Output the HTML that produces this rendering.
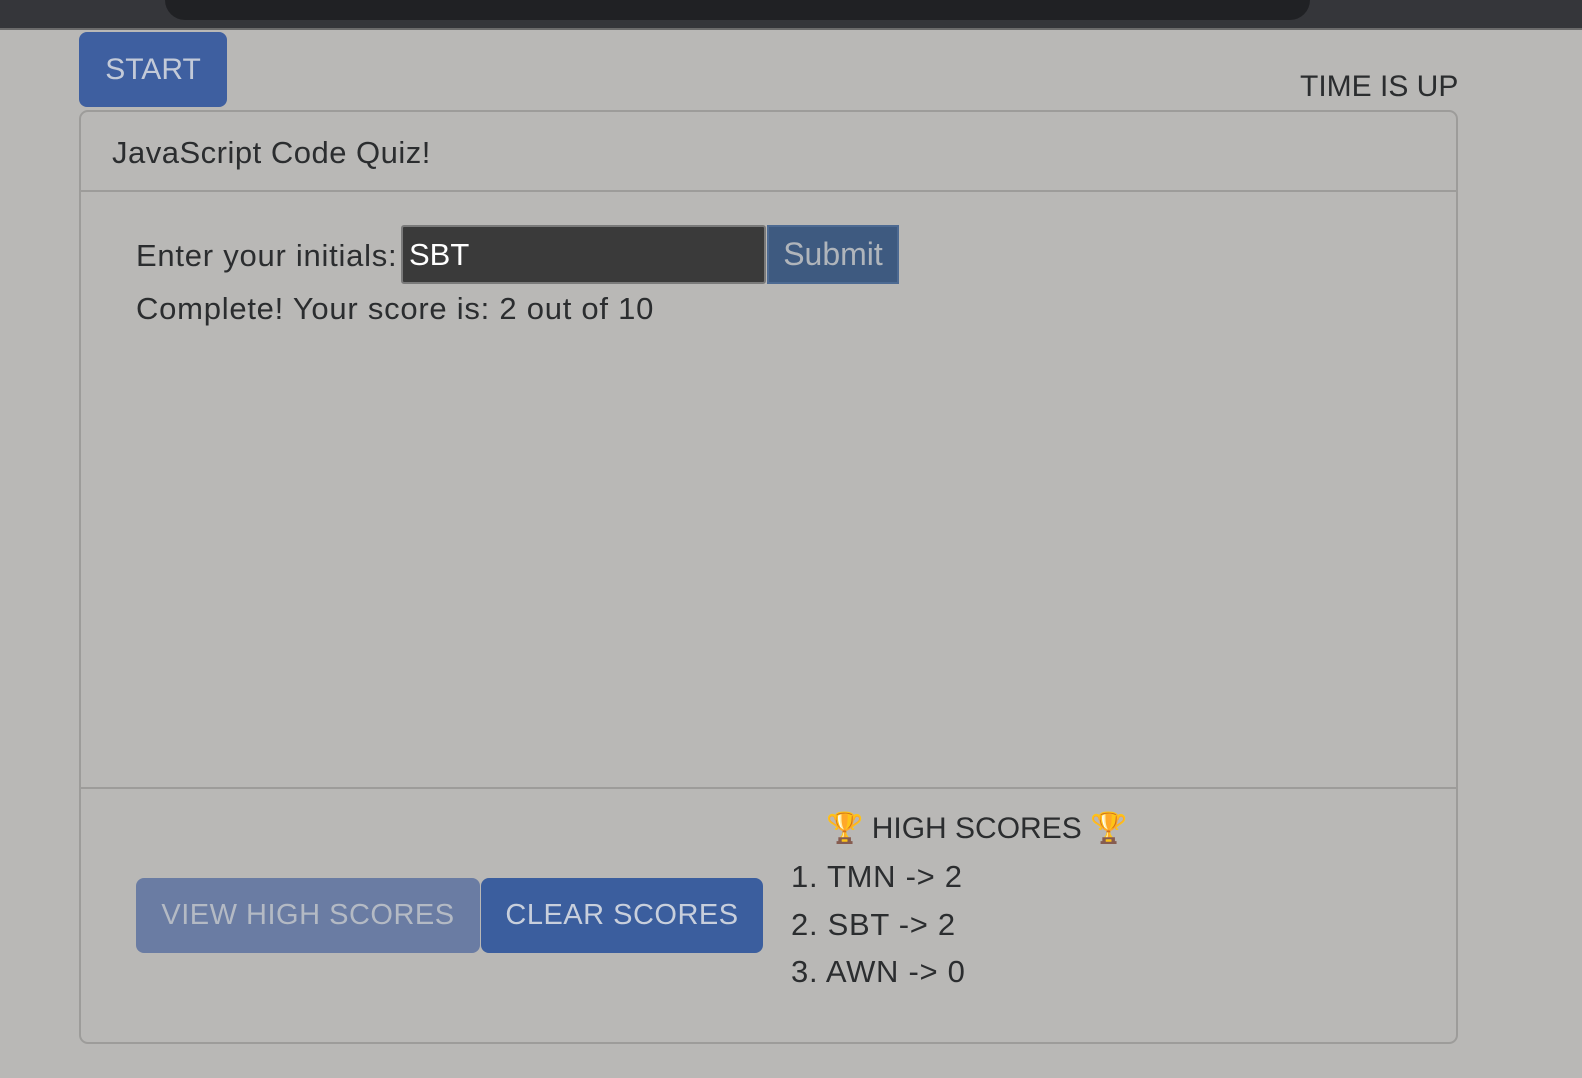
<!DOCTYPE html>
<html><head><meta charset="utf-8"><style>
*{margin:0;padding:0;box-sizing:border-box}
body{width:1582px;height:1078px;background:#b9b8b6;font-family:"Liberation Sans",sans-serif;color:#2b2d2f;position:relative;overflow:hidden}
.a{position:absolute;white-space:nowrap}
</style></head><body>
<div class="a" style="left:0;top:0;width:1582px;height:28px;background:#35363a"></div>
<div class="a" style="left:165px;top:0;width:1145px;height:20px;background:#202124;border-radius:0 0 20px 20px"></div>
<div class="a" style="left:0;top:28px;width:1582px;height:2px;background:#6b6b6b"></div>
<div class="a" style="left:79px;top:32px;width:148px;height:75px;background:#3e5fa0;border-radius:8px;color:#c3cad8;font-size:30px;line-height:75px;text-align:center">START</div>
<div class="a" style="left:1300px;top:69px;font-size:30px;line-height:36px">TIME IS UP</div>
<div class="a" style="left:79px;top:110px;width:1379px;height:934px;border:2px solid #9d9c9a;border-radius:9px"></div>
<div class="a" style="left:80px;top:190px;width:1377px;height:2px;background:#9d9c9a"></div>
<div class="a" style="left:80px;top:787px;width:1377px;height:2px;background:#9d9c9a"></div>
<div class="a" style="left:112px;top:135px;font-size:31px;line-height:36px;letter-spacing:0.5px">JavaScript Code Quiz!</div>
<div class="a" style="left:136px;top:238px;font-size:31px;line-height:36px;letter-spacing:0.75px">Enter your initials:</div>
<div class="a" style="left:401px;top:225px;width:365px;height:59px;background:#3a3a3a;border:2px solid #7a7a7a;border-radius:3px;color:#fff;font-size:31px;line-height:55px;padding-left:6px">SBT</div>
<div class="a" style="left:767px;top:225px;width:132px;height:59px;background:#3e5a80;border:2px solid #4d6a92;color:#b0b5bb;font-size:32px;line-height:55px;text-align:center">Submit</div>
<div class="a" style="left:136px;top:291px;font-size:31px;line-height:36px;letter-spacing:0.75px">Complete! Your score is: 2 out of 10</div>
<div class="a" style="left:136px;top:878px;width:344px;height:75px;background:#6a7ca3;border-radius:8px;color:#b4bac4;font-size:29px;line-height:75px;text-align:center;letter-spacing:0.5px">VIEW HIGH SCORES</div>
<div class="a" style="left:481px;top:878px;width:282px;height:75px;background:#3b5e9e;border-radius:8px;color:#c8cfdc;font-size:29px;line-height:75px;text-align:center;letter-spacing:0.5px">CLEAR SCORES</div>
<div class="a" style="left:826px;top:811px;font-size:30px;line-height:36px">🏆 HIGH SCORES 🏆</div>
<div class="a" style="left:791px;top:859px;font-size:31px;line-height:36px;letter-spacing:0.7px">1. TMN -&gt; 2</div>
<div class="a" style="left:791px;top:907px;font-size:31px;line-height:36px;letter-spacing:0.7px">2. SBT -&gt; 2</div>
<div class="a" style="left:791px;top:954px;font-size:31px;line-height:36px;letter-spacing:0.7px">3. AWN -&gt; 0</div>
</body></html>
